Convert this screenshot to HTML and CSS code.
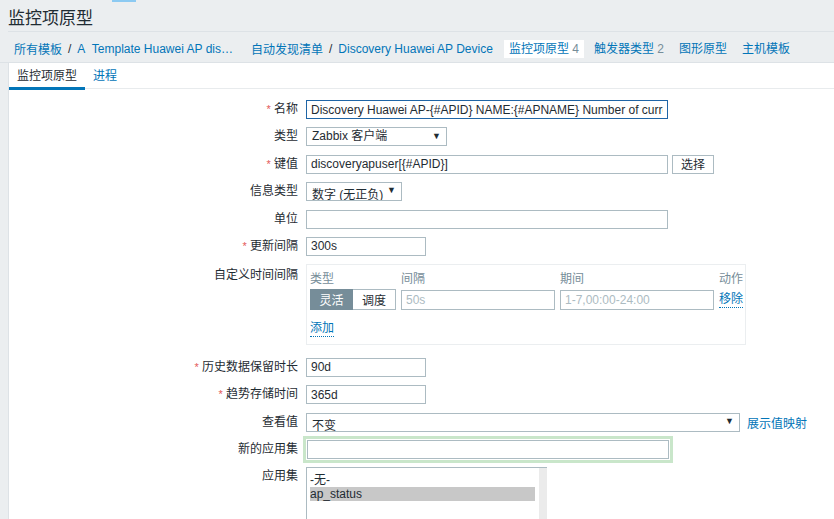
FILE: index.html
```html
<!DOCTYPE html>
<html lang="zh-CN">
<head>
<meta charset="utf-8">
<title>监控项原型</title>
<link rel="stylesheet" href="styles.css">
</head>
<body>
<div class="top-strip"><span class="top-mark"></span></div>
<header class="page-header"><h1>监控项原型</h1></header>
<nav class="breadcrumbs">
  <div class="crumb-group">
    <a href="#" class="link">所有模板</a><span class="sep">/</span><a href="#" class="link">A&nbsp; Template Huawei AP dis…</a>
  </div>
  <div class="crumb-group">
    <a href="#" class="link">自动发现清单</a><span class="sep">/</span><a href="#" class="link">Discovery Huawei AP Device</a>
  </div>
  <a href="#" class="crumb selected">监控项原型 <span class="count">4</span></a>
  <a href="#" class="crumb">触发器类型 <span class="count">2</span></a>
  <a href="#" class="crumb">图形原型</a>
  <a href="#" class="crumb">主机模板</a>
</nav>
<main class="content">
  <ul class="tabs">
    <li class="tab active">监控项原型</li>
    <li class="tab">进程</li>
  </ul>
  <form class="form">
    <div class="row">
      <label class="label"><span class="req">*</span> 名称</label>
      <div class="field"><input class="input wide focused" value="Discovery Huawei AP-{#APID} NAME:{#APNAME} Number of current users"></div>
    </div>
    <div class="row">
      <label class="label">类型</label>
      <div class="field"><div class="select w-type"><span class="sel-text">Zabbix 客户端</span><span class="arrow">▼</span></div></div>
    </div>
    <div class="row">
      <label class="label"><span class="req">*</span> 键值</label>
      <div class="field"><input class="input wide" value="discoveryapuser[{#APID}]"><button type="button" class="btn">选择</button></div>
    </div>
    <div class="row">
      <label class="label">信息类型</label>
      <div class="field"><div class="select w-info clipped"><span class="sel-text">数字 (无正负)</span><span class="arrow">▼</span></div></div>
    </div>
    <div class="row">
      <label class="label">单位</label>
      <div class="field"><input class="input wide" value=""></div>
    </div>
    <div class="row">
      <label class="label"><span class="req">*</span> 更新间隔</label>
      <div class="field"><input class="input short" value="300s"></div>
    </div>
    <div class="row row-box">
      <label class="label label-box">自定义时间间隔</label>
      <div class="field">
        <div class="interval-box">
          <div class="ib-grid">
            <span class="ib-head">类型</span>
            <span class="ib-head">间隔</span>
            <span class="ib-head">期间</span>
            <span class="ib-head">动作</span>
            <div class="segmented"><span class="seg on">灵活</span><span class="seg">调度</span></div>
            <input class="input ib-input" placeholder="50s">
            <input class="input ib-input" placeholder="1-7,00:00-24:00">
            <a href="#" class="link dotted">移除</a>
          </div>
          <a href="#" class="link dotted add">添加</a>
        </div>
      </div>
    </div>
    <div class="row">
      <label class="label"><span class="req">*</span> 历史数据保留时长</label>
      <div class="field"><input class="input short" value="90d"></div>
    </div>
    <div class="row">
      <label class="label"><span class="req">*</span> 趋势存储时间</label>
      <div class="field"><input class="input short" value="365d"></div>
    </div>
    <div class="row">
      <label class="label">查看值</label>
      <div class="field"><div class="select w-view clipped"><span class="sel-text">不变</span><span class="arrow">▼</span></div><a href="#" class="link map-link">展示值映射</a></div>
    </div>
    <div class="row row-glow">
      <label class="label">新的应用集</label>
      <div class="field"><div class="glow"><input class="input wide" value=""></div></div>
    </div>
    <div class="row">
      <label class="label">应用集</label>
      <div class="field">
        <div class="listbox">
          <div class="lb-items">
            <div class="lb-item">-无-</div>
            <div class="lb-item chosen">ap_status</div>
          </div>
          <div class="lb-scroll"></div>
        </div>
      </div>
    </div>
  </form>
</main>
</body>
</html>
```

FILE: styles.css
```css
* { box-sizing: border-box; }

html, body {
  margin: 0;
  padding: 0;
  height: 100%;
  overflow: hidden;
}

body {
  background: #ebeef0;
  color: #1f2c33;
  font-family: "Liberation Sans", Arial, "Noto Sans CJK SC", sans-serif;
  font-size: 12px;
}

.top-strip {
  height: 2px;
  display: flex;
}

.top-mark {
  margin-left: 112px;
  width: 24px;
  height: 2px;
  background: #8ccaf2;
}

.page-header {
  margin-left: 8px;
  border-bottom: 1px solid #dde2e6;
}

.page-header h1 {
  margin: 0;
  height: 29px;
  padding-top: 7px;
  font-size: 17px;
  font-weight: normal;
  line-height: 20px;
  color: #1f2c33;
  font-family: "Liberation Sans", "Noto Sans CJK SC", sans-serif;
}

.breadcrumbs {
  display: flex;
  align-items: center;
  height: 31px;
  padding: 3px 0 0 14px;
  border-bottom: 1px solid #dde2e6;
}

.breadcrumbs .crumb-group {
  display: flex;
  align-items: center;
  margin-right: 18px;
}

.crumb-group:nth-child(2) { margin-right: 11px; }

.sep {
  color: #1f2c33;
  margin: 0 6px 0 6px;
}

.link {
  color: #0275b8;
  text-decoration: none;
}

.crumb {
  color: #0275b8;
  text-decoration: none;
  padding: 0 5px;
  height: 18px;
  line-height: 18px;
  margin-right: 5px;
}

.crumb.selected {
  background: #ffffff;
  margin-right: 5px;
}

.count { color: #768d99; }

.content {
  margin-left: 8px;
  background: #ffffff;
  border-left: 1px solid #dde2e6;
  height: calc(100% - 63px);
}

.tabs {
  list-style: none;
  margin: 0;
  padding: 0;
  display: flex;
  border-bottom: 1px solid #e8ebed;
  height: 26px;
}

.tab {
  padding: 0 8px;
  line-height: 22px;
  padding-top: 2px;
  color: #0275b8;
}

.tab.active {
  color: #1f2c33;
  border-bottom: 3px solid #0275b8;
  height: 27px;
}

.form {
  padding-top: 11px;
  display: flex;
  flex-direction: column;
  gap: 8.4px;
}

.row {
  display: grid;
  grid-template-columns: 289px 1fr;
  column-gap: 8px;
  align-items: start;
}

.label {
  text-align: right;
  line-height: 19px;
  white-space: nowrap;
  font-family: "Liberation Sans", "Noto Sans CJK SC", sans-serif;
}

.req {
  color: #e45959;
  font-size: 11px;
}

.field {
  display: flex;
  align-items: center;
}

.input {
  height: 19px;
  border: 1px solid #acbbc2;
  padding: 0 4px;
  font: 12px "Liberation Sans", "Noto Sans CJK SC", sans-serif;
  color: #1f2c33;
  background: #ffffff;
  outline: none;
}

.input::placeholder { color: #acbbc2; }

.wide { width: 362px; }
.short { width: 120px; }

.focused {
  border-color: #1f65a6;
}

.btn {
  margin-left: 4px;
  height: 19px;
  width: 42px;
  border: 1px solid #acbbc2;
  background: #ffffff;
  font: 12px "Noto Sans CJK SC", sans-serif;
  color: #1f2c33;
  padding: 0;
  line-height: 16px;
}

.select {
  display: flex;
  align-items: center;
  justify-content: space-between;
  height: 19px;
  border: 1px solid #acbbc2;
  padding: 0 5px 0 5px;
  line-height: 17px;
  overflow: hidden;
  background: #ffffff;
  font-family: "Liberation Sans", "Noto Sans CJK SC", sans-serif;
}

.select.clipped .sel-text {
  padding-top: 4px;
  line-height: 17px;
}

.select.clipped { align-items: flex-start; }
.select.clipped .arrow { line-height: 15px; }

.w-type { width: 141px; }
.w-info { width: 96px; }
.w-view { width: 434px; }

.arrow {
  font-size: 9px;
  color: #1f2c33;
}

.map-link { margin-left: 7px; }

.label-box { line-height: 19px; padding-top: 2px; }

.interval-box {
  width: 440px;
  border: 1px solid #ebeef0;
  padding: 5px 1px 7px 3px;
  margin-bottom: 4px;
}

.ib-grid {
  display: grid;
  grid-template-columns: 86px 154px 154px 1fr;
  column-gap: 5px;
  row-gap: 1px;
  align-items: center;
  white-space: nowrap;
}

.ib-head {
  color: #768d99;
  line-height: 18px;
}

.ib-input { width: 154px; height: 20px; }

.segmented {
  display: flex;
  height: 21px;
}

.seg {
  width: 43px;
  border: 1px solid #acbbc2;
  text-align: center;
  line-height: 19px;
  font-family: "Noto Sans CJK SC", sans-serif;
}

.seg + .seg { border-left: none; }

.seg.on {
  background: #768d99;
  border-color: #768d99;
  color: #ffffff;
}

.dotted {
  border-bottom: 1px dotted #0275b8;
  line-height: 15px;
  justify-self: start;
}

.add {
  display: inline-block;
  margin-top: 11px;
}

.row-glow .field { margin-left: -3px; }

.glow {
  border: 3px solid #c9e6ca;
  padding: 1px;
  margin-top: -4px;
  margin-bottom: -4px;
}

.glow .input { display: block; }

.listbox {
  display: flex;
  width: 241px;
  height: 60px;
  border: 1px solid #acbbc2;
  border-right: none;
  border-bottom: none;
}

.lb-items {
  flex: 1;
  padding: 5px 4px 0 3px;
}

.lb-item {
  line-height: 14px;
  height: 14px;
  font-family: "Liberation Sans", "Noto Sans CJK SC", sans-serif;
}

.lb-item.chosen {
  background: #c8c8c8;
}

.lb-scroll {
  width: 8px;
  background: #ebebeb;
}
```
